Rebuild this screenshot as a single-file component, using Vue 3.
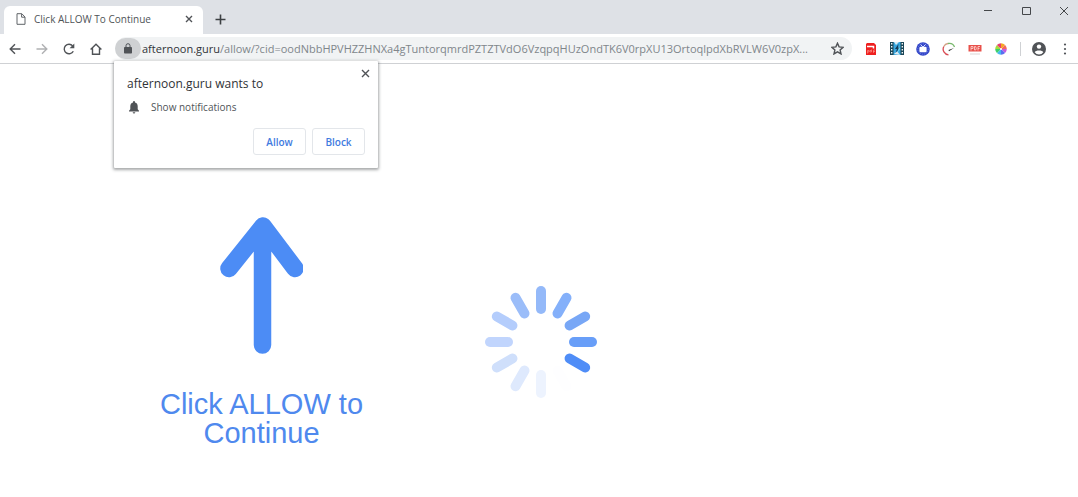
<script setup>
import { ref } from 'vue'

const path = ref('/allow/?cid=oodNbbHPVHZZHNXa4gTuntorqmrdPZTZTVdO6VzqpqHUzOndTK6V0rpXU13OrtoqlpdXbRVLW6V0zpX...')
const promptOpen = ref(true)

const spokes = [
  '#94b9f9', '#84b0fa', '#78a7f6', '#689ef8', '#4f8df7', '#fefeff',
  '#edf3fe', '#dee9fd', '#cfdffb', '#c1d5fd', '#b4cdfc', '#9bbdf9'
].map((color, i) => ({ color, turn: `rotate(${i * 30} 56 56)` }))

const wheel = ['#f5a623', '#f26b5b', '#c55be0', '#5a6df0', '#45b8ee', '#3ccf6b', '#a5dc3c', '#e83e6e']
  .map((color, i) => ({ color, turn: `rotate(${i * 45} 6 6)` }))
</script>

<template>
  <div class="browser">
    <header class="titlebar">
      <div class="tab">
        <svg class="page-icon" width="10" height="12" viewBox="0 0 10 12"><path d="M1 .7h4.8L9 4v7.3H1zM5.6.9v3.3H9" /></svg>
        <span class="tab-title">Click ALLOW To Continue</span>
        <button class="tab-close" aria-label="Close tab">
          <svg width="8" height="8" viewBox="0 0 8 8"><path d="M1 1l6 6M7 1L1 7" /></svg>
        </button>
      </div>
      <button class="new-tab" aria-label="New tab">
        <svg width="11" height="11" viewBox="0 0 11 11"><path d="M5.5 .5v10M.5 5.5h10" /></svg>
      </button>
      <div class="window-controls">
        <button aria-label="Minimize"><svg width="10" height="10" viewBox="0 0 10 10"><path d="M1 4.5h8" /></svg></button>
        <button aria-label="Maximize"><svg width="10" height="10" viewBox="0 0 10 10"><path d="M1.5 1.5h8v7h-8z" /></svg></button>
        <button aria-label="Close"><svg width="10" height="10" viewBox="0 0 10 10"><path d="M1 1l8 8M9 1L1 9" /></svg></button>
      </div>
    </header>

    <div class="toolbar">
      <nav class="nav">
        <button aria-label="Back"><svg class="line" width="12" height="12" viewBox="0 0 12 12"><path d="M11.5 6H1.5M6 1.2L1.2 6 6 10.8" /></svg></button>
        <button aria-label="Forward" class="off"><svg class="line" width="12" height="12" viewBox="0 0 12 12"><path d="M.5 6h10M6 1.2L10.8 6 6 10.8" /></svg></button>
        <button aria-label="Reload"><svg width="12" height="12" viewBox="0 0 12 12"><path class="line" d="M10.3 8.2A4.8 4.8 0 1 1 9.7 2.9" /><path class="solid" d="M11.3.6v4.7H6.6z" /></svg></button>
        <button aria-label="Home"><svg class="line" width="12" height="12" viewBox="0 0 12 12"><path d="M.6 6.4L6 1.2l5.4 5.2M2.5 5.2v6h7v-6" /></svg></button>
      </nav>

      <div class="omnibox">
        <button class="lock" aria-label="Site information">
          <svg width="8" height="11" viewBox="0 0 8 11"><path class="solid" d="M.8 4h6.4q.8 0 .8.8v4.9q0 .8-.8.8H.8q-.8 0-.8-.8V4.8Q0 4 .8 4z" /><path d="M2 4.5V2.7a2 2 0 0 1 4 0v1.8" fill="none" stroke="#4d5156" /></svg>
        </button>
        <label class="host" for="address">afternoon.guru</label>
        <input id="address" v-model="path" class="path" type="text" spellcheck="false" />
        <button class="star" aria-label="Bookmark this page">
          <svg class="line" width="13" height="13" viewBox="0 0 13 13"><path d="M6.5 1.2l1.6 3.7 4 .4-3 2.7.9 3.9-3.5-2.1L3 11.9 3.9 8l-3-2.7 4-.4z" /></svg>
        </button>
      </div>

      <div class="extensions">
        <button aria-label="PDF converter">
          <svg width="12" height="14" viewBox="0 0 12 14">
            <path d="M2 1h7l2 2v10H1V2z" fill="#ee2020" />
            <path d="M2 4.5h6.500V6.500" fill="none" stroke="#fff" stroke-width="1.5" />
            <path d="M2.500 11.500v-3H4v1.500H2.500M6.500 7.500V10H5V8.500h1.500M8.500 11V8H10M8 9.500h2" fill="none" stroke="#ff9b8f" stroke-width=".6" />
          </svg>
        </button>
        <button aria-label="Video downloader">
          <svg width="14" height="13" viewBox="0 0 14 13">
            <path d="M0 0h14v13H0z" fill="#1b4656" /><path d="M3.5 0h7v13h-7z" fill="#3aa7df" />
            <path d="M1.7 1v12M12.3 1v12" stroke="#fff" stroke-width="1.3" stroke-dasharray="1.5 1.5" />
            <path d="M4 0h5L6 3zM4 12l3-3 3 4z" fill="#dcecf3" />
            <path d="M8.5 2L5 7h2l-1.500 4L10 5.500H8z" fill="#143b58" /><path d="M9 4l1 3-2 3z" fill="#7de0f5" />
          </svg>
        </button>
        <button aria-label="TV">
          <svg width="14" height="14" viewBox="0 0 14 14">
            <circle cx="7" cy="7" r="6.8" fill="#3346c8" />
            <circle cx="7" cy="7" r="5.2" fill="none" stroke="#7f93ea" stroke-width=".7" stroke-dasharray="1 1" />
            <rect x="3.4" y="4.8" width="7.2" height="5.4" rx="1.2" fill="#fff" />
            <path d="M7 5L4.5 2.5M7 5l2.500-2.500" stroke="#d7e0ff" />
          </svg>
        </button>
        <button aria-label="Speed test">
          <svg width="14" height="14" viewBox="0 0 14 14" fill="none" stroke-width="1.3">
            <path d="M6.500 12.800A5.700 5.700 0 0 1 1.800 4.500" stroke="#d94d55" /><path d="M1.800 4.500A5.700 5.700 0 0 1 6 1.500" stroke="#d2a083" /><path d="M6 1.500A5.700 5.700 0 0 1 12.500 5" stroke="#78b86d" />
            <path d="M6.500 8l5.500-2-5 3.200z" fill="#333" />
          </svg>
        </button>
        <button aria-label="PDF viewer">
          <svg width="14" height="12" viewBox="0 0 14 12">
            <path d="M.5 2h13v6.500H.5z" fill="#e8504a" />
            <path d="M3 7.500V3.500h2v2H3M6.500 3.500V7h1.200l.6-1.500-.6-2H6.500M10 7.500v-4h2M10 5.500h1.500" fill="none" stroke="#ffd9d5" stroke-width=".8" />
            <path d="M2 11h10" stroke="#dcd5d5" />
          </svg>
        </button>
        <button aria-label="Color wheel">
          <svg width="12" height="12" viewBox="0 0 12 12">
            <path v-for="w in wheel" :key="w.color" d="M6 6V.2A5.800 5.800 0 0 1 10.100 1.900z" :fill="w.color" :transform="w.turn" />
            <circle cx="6" cy="6" r="1" fill="#fff" />
          </svg>
        </button>
      </div>
      <span class="divider"></span>
      <div class="extensions">
        <button aria-label="Profile">
          <svg width="14" height="14" viewBox="0 0 14 14">
            <circle cx="7" cy="7" r="7" fill="#505357" /><circle cx="7" cy="4.600" r="2.200" fill="#fff" />
            <path d="M2.700 10.300c.6-2.400 8-2.400 8.600 0A5.300 5.300 0 0 1 2.700 10.300z" fill="#fff" />
          </svg>
        </button>
        <button aria-label="Menu">
          <svg class="solid" width="4" height="12" viewBox="0 0 4 12"><circle cx="2" cy="1.5" r="1.1" /><circle cx="2" cy="6" r="1.1" /><circle cx="2" cy="10.5" r="1.1" /></svg>
        </button>
      </div>
    </div>

    <section v-if="promptOpen" class="prompt" role="dialog" aria-labelledby="prompt-title">
      <button class="prompt-close" aria-label="Dismiss" @click="promptOpen = false">
        <svg width="9" height="9" viewBox="0 0 9 9"><path d="M1 1l7 7M8 1L1 8" /></svg>
      </button>
      <h2 id="prompt-title">afternoon.guru wants to</h2>
      <p class="permission">
        <svg class="solid" width="10" height="13" viewBox="0 0 10 13"><path d="M5 0q1 0 1 1v.5q2.700.8 2.700 3.800v3L10 9.800v.7H0v-.7l1.300-1.500v-3q0-3 2.700-3.800V1q0-1 1-1zM3.700 11.200h2.600a1.300 1.300 0 0 1-2.600 0z" /></svg>
        <span>Show notifications</span>
      </p>
      <div class="actions">
        <button @click="promptOpen = false">Allow</button>
        <button @click="promptOpen = false">Block</button>
      </div>
    </section>

    <main class="page">
      <div class="hint">
        <svg width="83" height="138" viewBox="0 0 83 138" fill="none" stroke="#4c8cf5" stroke-width="17.500" stroke-linecap="round" stroke-linejoin="round">
          <path d="M9 51.500L43 9l32 42.500M42.500 12v116" />
        </svg>
        <p>Click ALLOW to<br />Continue</p>
      </div>
      <svg class="spinner" width="112" height="112" viewBox="0 0 112 112" role="img" aria-label="Loading">
        <rect v-for="s in spokes" :key="s.turn" x="51" y="0" width="10" height="28" rx="5" :fill="s.color" :transform="s.turn" />
      </svg>
    </main>
  </div>
</template>

<style>
body {
  margin: 0;
  background: #fff;
}
</style>

<style scoped>
.browser {
  position: relative;
  min-height: 100vh;
  font-family: "Open Sans", "Noto Sans", sans-serif;
  color: #505458;
}
button {
  display: flex;
  align-items: center;
  justify-content: center;
  flex: none;
  padding: 0;
  border: 0;
  background: none;
  font-family: inherit;
}
svg {
  display: block;
  flex: none;
}
.line {
  fill: none;
  stroke: #505357;
  stroke-width: 1.4;
}
.solid {
  fill: #505357;
}
.titlebar {
  display: flex;
  height: 34px;
  padding-left: 4px;
  background: #dee1e6;
}
.tab {
  display: flex;
  align-items: center;
  box-sizing: border-box;
  width: 199px;
  height: 28px;
  margin-top: 6px;
  padding: 0 8px 2px 12px;
  border-radius: 6px 6px 0 0;
  background: #fff;
}
.page-icon {
  fill: none;
  stroke: #606468;
}
.tab-title {
  flex: 1;
  margin-left: 8px;
  font-size: 10px;
  white-space: nowrap;
}
.tab-close {
  width: 12px;
  height: 16px;
}
.tab-close svg,
.prompt-close svg {
  stroke: #505357;
  stroke-width: 1.4;
}
.new-tab {
  width: 20px;
  height: 26px;
  margin: 6px 0 0 7px;
}
.new-tab svg {
  stroke: #3c4043;
  stroke-width: 1.6;
}
.window-controls {
  display: flex;
  gap: 10px;
  margin-left: auto;
}
.window-controls button {
  width: 28px;
  height: 22px;
}
.window-controls svg {
  fill: none;
  stroke: #44474a;
}
.toolbar {
  display: flex;
  align-items: center;
  height: 29px;
  border-bottom: 1px solid #cfd1d4;
  background: #fff;
}
.nav {
  display: flex;
  gap: 1px;
  padding-left: 2px;
}
.nav button,
.extensions button {
  width: 26px;
  height: 26px;
}
.nav .off {
  opacity: .45;
}
.omnibox {
  display: flex;
  align-items: center;
  flex: 1;
  min-width: 0;
  height: 23px;
  margin: 0 6px;
  border-radius: 12px;
  background: #f1f3f4;
  font-size: 11px;
}
.lock {
  width: 26px;
  height: 21px;
  margin-right: 1px;
  border-radius: 11px;
  background: #cfd1d3;
}
.host {
  color: #303337;
}
.path {
  flex: 1;
  min-width: 0;
  padding: 0;
  border: 0;
  outline: 0;
  background: none;
  color: #80868b;
  font: inherit;
  text-overflow: ellipsis;
}
.star {
  width: 30px;
  height: 22px;
}
.divider {
  width: 1px;
  height: 14px;
  margin: 0 5px 0 6px;
  background: #cfd1d4;
}
.extensions {
  display: flex;
}
.prompt {
  position: absolute;
  top: 61px;
  left: 114px;
  box-sizing: border-box;
  width: 264px;
  padding: 14px 13px 13px;
  border-radius: 1px;
  background: #fff;
  box-shadow: 0 1px 3px 1px rgba(60, 64, 67, .45);
}
.prompt-close {
  position: absolute;
  top: 4px;
  right: 5px;
  width: 16px;
  height: 16px;
}
.prompt h2 {
  margin: 0;
  font-size: 12px;
  font-weight: 400;
  line-height: 18px;
  color: #303337;
}
.permission {
  display: flex;
  align-items: center;
  gap: 12px;
  margin: 6px 0 0;
  padding-left: 2px;
  font-size: 10px;
  line-height: 16px;
}
.actions {
  display: flex;
  justify-content: flex-end;
  gap: 6px;
  margin-top: 13px;
}
.actions button {
  box-sizing: border-box;
  width: 53px;
  height: 27px;
  border: 1px solid #e3e6ea;
  border-radius: 3px;
  color: #3f7be0;
  font-size: 10px;
  font-weight: 600;
}
.page {
  display: grid;
  grid-template-columns: 1fr auto 1fr;
  align-items: start;
  padding: 153px 0 24px 4px;
}
.hint {
  display: flex;
  flex-direction: column;
  align-items: center;
  padding-left: 34px;
}
.hint p {
  margin: 35px 0 0;
  color: #4f89ee;
  font-family: "Liberation Sans", Arial, sans-serif;
  font-size: 29px;
  line-height: 29px;
  text-align: center;
}
.spinner {
  margin-top: 69px;
}
</style>
